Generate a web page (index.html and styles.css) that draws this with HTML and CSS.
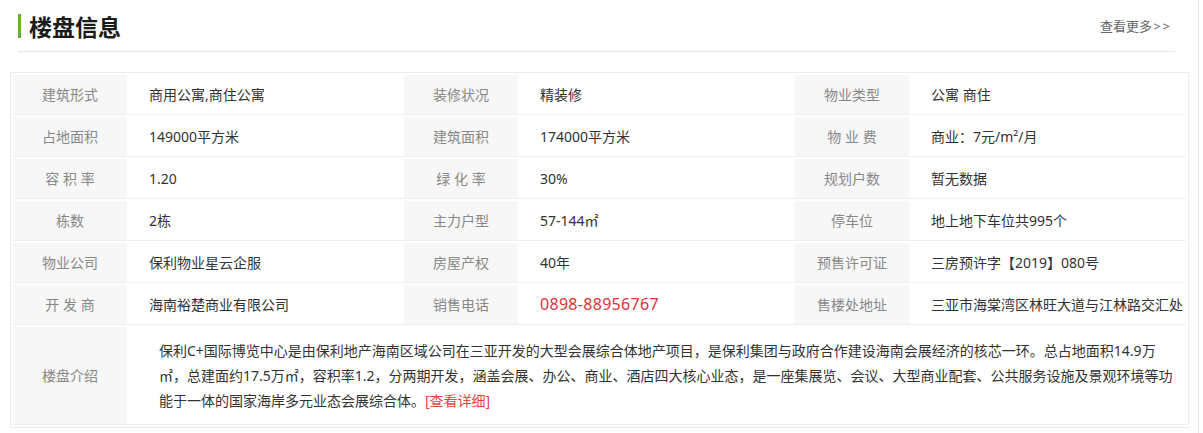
FILE: index.html
```html
<!DOCTYPE html>
<html lang="zh-CN">
<head>
<meta charset="utf-8">
<title>楼盘信息</title>
<link rel="stylesheet" href="styles.css">
</head>
<body>
<div class="wrap">
  <div class="head">
    <h2 class="title">楼盘信息</h2>
    <a class="more" href="#">查看更多<span class="arrows">&gt;&gt;</span></a>
  </div>
  <table class="info">
    <colgroup>
      <col class="c-label"><col class="c-value">
      <col class="c-label"><col class="c-value">
      <col class="c-label"><col class="c-value">
    </colgroup>
    <tbody>
      <tr>
        <th>建筑形式</th><td>商用公寓,商住公寓</td>
        <th>装修状况</th><td>精装修</td>
        <th>物业类型</th><td>公寓 商住</td>
      </tr>
      <tr>
        <th>占地面积</th><td>149000平方米</td>
        <th>建筑面积</th><td>174000平方米</td>
        <th>物 业 费</th><td>商业：7元/m²/月</td>
      </tr>
      <tr>
        <th>容 积 率</th><td>1.20</td>
        <th>绿 化 率</th><td>30%</td>
        <th>规划户数</th><td>暂无数据</td>
      </tr>
      <tr>
        <th>栋数</th><td>2栋</td>
        <th>主力户型</th><td>57-144㎡</td>
        <th>停车位</th><td>地上地下车位共995个</td>
      </tr>
      <tr>
        <th>物业公司</th><td>保利物业星云企服</td>
        <th>房屋产权</th><td>40年</td>
        <th>预售许可证</th><td>三房预许字【2019】080号</td>
      </tr>
      <tr>
        <th>开 发 商</th><td>海南裕楚商业有限公司</td>
        <th>销售电话</th><td class="phone">0898-88956767</td>
        <th>售楼处地址</th><td class="nowrap">三亚市海棠湾区林旺大道与江林路交汇处</td>
      </tr>
      <tr class="intro">
        <th>楼盘介绍</th>
        <td colspan="5"><p class="intro-text">保利C+国际博览中心是由保利地产海南区域公司在三亚开发的大型会展综合体地产项目，是保利集团与政府合作建设海南会展经济的核芯一环。总占地面积14.9万㎡，总建面约17.5万㎡，容积率1.2，分两期开发，涵盖会展、办公、商业、酒店四大核心业态，是一座集展览、会议、大型商业配套、公共服务设施及景观环境等功能于一体的国家海岸多元业态会展综合体。<a class="detail" href="#">[查看详细]</a></p></td>
      </tr>
    </tbody>
  </table>
</div>
</body>
</html>
```

FILE: styles.css
```css
html, body {
  margin: 0;
  padding: 0;
  background: #fff;
}

body {
  font-family: "Noto Sans", "Noto Sans CJK SC", sans-serif;
  font-size: 14px;
  color: #333;
}

.wrap {
  width: 1198px;
  height: 433px;
  border-right: 1px solid #e4e4e4;
  overflow: hidden;
}

.head {
  display: flex;
  align-items: center;
  justify-content: space-between;
  height: 51px;
  margin: 0 23px 0 18px;
  border-bottom: 1px solid #e6e6e6;
}

.title {
  margin: 0;
  padding-left: 8px;
  border-left: 3px solid #66b22f;
  font-size: 23px;
  line-height: 24px;
  font-weight: bold;
  color: #1a1a1a;
  font-family: "Noto Sans CJK SC", sans-serif;
}

.more {
  font-size: 13px;
  color: #666;
  text-decoration: none;
  margin-right: 3px;
}

.more .arrows {
  letter-spacing: 2px;
  margin-left: 1px;
}

.info {
  margin: 20px 0 0 10px;
  width: 1177px;
  table-layout: fixed;
  border: 1px solid #ececec;
  border-collapse: separate;
  border-spacing: 0 2px;
  padding: 0 2px;
}

.c-label { width: 114px; }
.c-value { width: 277px; }

.info th,
.info td {
  padding: 0;
  line-height: 39px;
  border-bottom: 1px solid #efefef;
  text-align: left;
  vertical-align: middle;
  white-space: nowrap;
}

.info th {
  background: #f7f7f7;
  color: #888;
  font-weight: normal;
  text-align: center;
}

.info td {
  padding-left: 22px;
  color: #333;
}

.info td.phone {
  font-size: 16px;
  color: #e2323b;
  letter-spacing: 0.3px;
}

.info td.nowrap {
  overflow: visible;
}

.intro td {
  white-space: normal;
  padding: 11px 13px 11px 32px;
  line-height: 25px;
}

.intro-text {
  margin: 0;
}

.detail {
  color: #e8453f;
  text-decoration: none;
}
```
